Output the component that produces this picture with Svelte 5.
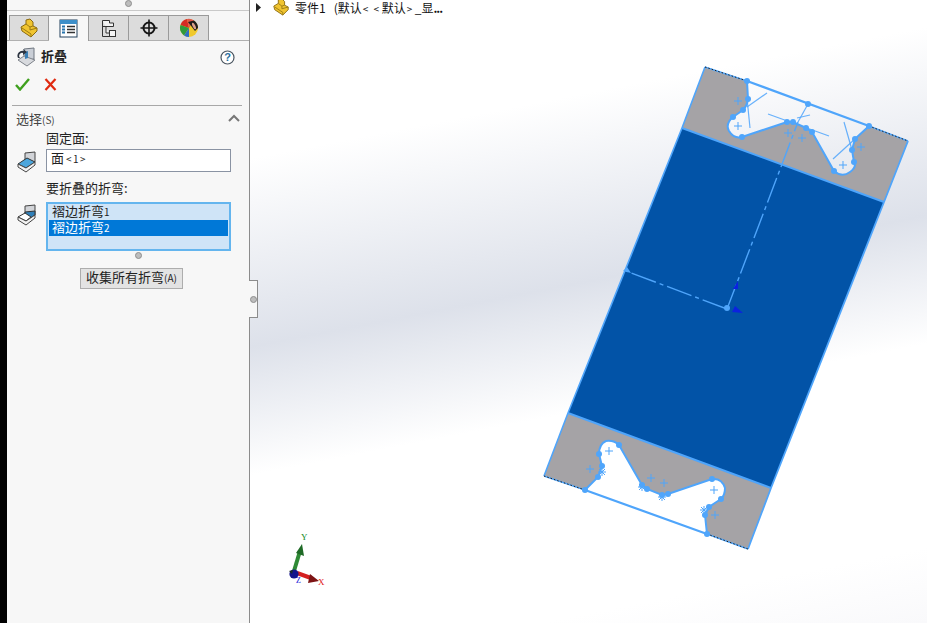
<script lang="ts">
  const tabs = ['part', 'tree', 'config', 'target', 'look']

  const topPoints = [[747,81],[748,99],[743,110],[733,117],[742,137],[787,122],[793,122],[806,128],[812,132],[834,171],[854,162],[852,150],[855,139],[869,126],[808,104]]
  const bottomPoints = [[585,490],[598,477],[602,466],[599,454],[619,445],[642,485],[647,489],[662,495],[668,494],[712,479],[721,499],[709,507],[705,515],[707,534]]
  const crosses = [[738,101],[738,126],[788,133],[802,138],[843,165],[861,147],[609,451],[590,469],[651,478],[664,483],[714,490],[715,515]]
  const thinLines = [
    [767,93,747,107],[747,98,750,128],[768,114,829,136],[810,115,797,118],
    [808,104,798,122],[844,122,852,150],[833,159,867,128]
  ]
  const stars = [[602,472],[642,487],[662,497],[704,510]]

  const topNotch = 'M747 81 L748 99 Q747 106 743 110 L733 117 Q725 124 729 131 Q734 139 742 137 L787 122 L793 122 L806 128 L812 132 L834 171 Q842 178 850 172 Q857 167 854 162 L852 150 L855 139 L869 126'
  const bottomNotch = 'M585 490 L598 477 L602 466 L599 454 Q599 444 606 441 Q614 440 619 445 L642 485 L647 489 L662 495 L668 494 L712 479 Q722 478 725 488 Q725 495 721 499 L709 507 L705 515 L707 534'
</script>

<div class="app">
  <div class="strip"></div>

  <aside class="panel">
    <div class="grip"><span class="dot"></span></div>

    <div class="tabs">
      {#each tabs as tab}
        <div class="tab" class:tab--active={tab === 'tree'}>
          {#if tab === 'part'}
            <svg width="20" height="20" viewBox="0 0 20 20">
              <path d="M2 9 L7 6 L7 2 L11 1 L14 4 L14 8 L18 10 L18 13 L12 19 L3 13 Z" fill="#f0c430" stroke="#8a6a10"/>
              <path d="M7 6 L11 9 L14 8 M11 9 L11 12 L18 10 M3 10 L12 16 L12 19" fill="none" stroke="#9a7a14"/>
            </svg>
          {:else if tab === 'tree'}
            <svg width="19" height="19" viewBox="0 0 19 19">
              <rect x="1" y="1" width="17" height="17" fill="#fff" stroke="#23405c"/>
              <rect x="1" y="1" width="17" height="4" fill="#3d8fc9"/>
              <path d="M3 7.5h3M3 10.5h3M3 13.5h3" stroke="#2674ad" stroke-width="2"/>
              <path d="M8 7.5h8M8 10.5h8M8 13.5h8" stroke="#333" stroke-width="1.4"/>
            </svg>
          {:else if tab === 'config'}
            <svg width="16" height="19" viewBox="0 0 16 19" fill="#f4f4f4" stroke="#333">
              <path d="M1.5 1.5 H8.5 V4 H12.5 V7.5 H5 V14 H8"/>
              <path d="M1.5 1.5 V17.5 H8 M5 7.5 H1.5" fill="none"/>
              <rect x="8.5" y="11.5" width="6" height="6"/>
            </svg>
          {:else if tab === 'target'}
            <svg width="18" height="18" viewBox="0 0 18 18" fill="none" stroke="#151515">
              <circle cx="9" cy="9" r="5.5" stroke-width="2"/>
              <path d="M9 0.5v17M0.5 9h17" stroke-width="1.6"/>
            </svg>
          {:else}
            <svg width="20" height="20" viewBox="0 0 20 20">
              <circle cx="10" cy="10" r="9" fill="#f0c92c"/>
              <path d="M10 10 L1.5 7 A9 9 0 0 1 8 1 Z" fill="#d62a24"/>
              <path d="M10 10 L8 1 A9 9 0 0 1 15 2.5 Z" fill="#e2574a"/>
              <path d="M10 10 L1.5 7 A9 9 0 0 0 5 17.5 Z" fill="#2f9a3c"/>
              <path d="M10 10 L5 17.5 A9 9 0 0 0 10 19 Z" fill="#2c6fc4"/>
              <path d="M9 4 L15 2.5 A9 9 0 0 1 19 10 L16 13 Z" fill="#1d1d1d"/>
              <ellipse cx="15" cy="8" rx="1.4" ry="3.6" fill="#dca08c" transform="rotate(-25 15 8)"/>
            </svg>
          {/if}
        </div>
      {/each}
    </div>

    <header class="title-row">
      <svg class="title-icon" width="22" height="20" viewBox="0 0 22 20">
        <path d="M9 2 L19 1 L19 12 L9 14 Z" fill="#c9ced6" stroke="#6f7680"/>
        <path d="M3 13 L9 9 L20 13 L12 19 Z" fill="#d8dade" stroke="#7d828a"/>
        <path d="M10 5 L13 4 L13 11 L10 12 Z" fill="#3a7fb5"/>
        <path d="M3 11 A5 5 0 0 1 9 4 L8 2 L12 5 L8 8 L8 6 A3 3 0 0 0 5 11 Z" fill="#2c3440"/>
      </svg>
      <h1>折叠</h1>
      <svg class="help" width="15" height="15" viewBox="0 0 15 15">
        <circle cx="7.5" cy="7.5" r="6.5" fill="#fff" stroke="#4a5560" stroke-width="1.2"/>
        <text x="7.5" y="11" text-anchor="middle" class="help-mark">?</text>
      </svg>
    </header>

    <div class="actions">
      <svg width="15" height="13" viewBox="0 0 15 13"><path d="M1 7 L5 11.5 L14 1" fill="none" stroke="#3fa01e" stroke-width="2.4"/></svg>
      <svg width="13" height="13" viewBox="0 0 13 13"><path d="M1.5 1 L11.5 12 M11.5 1 L1.5 12" fill="none" stroke="#e02a10" stroke-width="2.2"/></svg>
    </div>

    <section class="section">
      <div class="section-head">
        <span>选择<small>(S)</small></span>
        <svg width="12" height="8" viewBox="0 0 12 8"><path d="M1 7 L6 2 L11 7" fill="none" stroke="#777" stroke-width="2"/></svg>
      </div>

      <div class="label">固定面:</div>
      <div class="field">
        <svg class="face-icon" width="20" height="22" viewBox="0 0 20 22">
          <path d="M8 2 L18 1 L18 11 L8 13 Z" fill="#d2d4d8" stroke="#444"/>
          <path d="M1 13 L10 7 L18 11 L9 17 Z" fill="#4da6dc" stroke="#333"/>
          <path d="M1 13 L9 17 L18 11 L18 14 L9 21 L1 16 Z" fill="#f2f2f2" stroke="#444"/>
        </svg>
        <div class="input">面<small class="spaced">&lt;1&gt;</small></div>
      </div>

      <div class="label label--second">要折叠的折弯:</div>
      <div class="field">
        <svg class="face-icon" width="20" height="22" viewBox="0 0 20 22">
          <path d="M8 2 L18 1 L18 11 L8 13 Z" fill="#d2d4d8" stroke="#444"/>
          <path d="M8 8 L18 7 L18 11 L12 15 L8 13 Z" fill="#2f7fb8" stroke="#333"/>
          <path d="M1 13 L8 9 L14 13 L9 17 Z" fill="#fff" stroke="#333"/>
          <path d="M1 13 L9 17 L18 11 L18 14 L9 21 L1 16 Z" fill="#f2f2f2" stroke="#444"/>
        </svg>
        <div class="list">
          <div class="item">褶边折弯<small>1</small></div>
          <div class="item item--selected">褶边折弯<small>2</small></div>
        </div>
      </div>
      <div class="list-grip"><span class="dot"></span></div>

      <div class="button-row">
        <button type="button">收集所有折弯<small>(A)</small></button>
      </div>
    </section>
  </aside>

  <div class="handle"><span class="dot"></span></div>

  <main class="viewport">
    <div class="breadcrumb">
      <svg width="7" height="9" viewBox="0 0 7 9"><path d="M1 0 L6 4.5 L1 9 Z" fill="#222"/></svg>
      <svg class="crumb-part" width="18" height="18" viewBox="0 0 20 20">
        <path d="M2 9 L7 6 L7 2 L11 1 L14 4 L14 8 L18 10 L18 13 L12 19 L3 13 Z" fill="#f0c430" stroke="#8a6a10"/>
        <path d="M7 6 L11 9 L14 8 M11 9 L11 12 L18 10 M3 10 L12 16 L12 19" fill="none" stroke="#9a7a14"/>
      </svg>
      <span>零件1&nbsp;&nbsp;&nbsp;(默认<small class="crumb-gap">&lt; &lt;</small>默认<small class="crumb-gap">&gt;</small>_显<b class="more">...</b></span>
    </div>

    <svg class="model" viewBox="250 0 677 623" width="677" height="623">
      <!-- flat regions -->
      <path d="M705 67 L747 81 L748 99 Q747 106 743 110 L733 117 Q725 124 729 131 Q734 139 742 137 L787 122 L793 122 L806 128 L812 132 L834 171 Q842 178 850 172 Q857 167 854 162 L852 150 L855 139 L869 126 L908 141 L884 202 L682 128 Z" fill="#a5a3a6"/>
      <path d="M568 413 L771 488 L748 549 L707 534 L705 515 L709 507 L721 499 Q725 495 725 488 Q722 478 712 479 L668 494 L662 495 L647 489 L642 485 L619 445 Q614 440 606 441 Q599 444 599 454 L602 466 L598 477 L585 490 L544 476 Z" fill="#a5a3a6"/>
      <path d="M682 128 L884 202 L771 488 L568 413 Z" fill="#0253a7"/>

      <!-- part outline -->
      <g fill="none" stroke="#4fa5fb">
        <path d="M705 67 L682 128 L568 413 L544 476" stroke-width="1.6"/>
        <path d="M908 141 L884 202 L771 488 L748 549" stroke-width="1.8"/>
        <path d="M682 128 L884 202 M568 413 L771 488" stroke-width="2"/>
        <path d={topNotch} stroke-width="2"/>
        <path d={bottomNotch} stroke-width="2"/>
        <path d="M747 81 L869 126 M585 490 L707 534" stroke-width="2.2"/>
        <path d="M705 67 L747 81 M869 126 L908 141 M544 476 L585 490 M707 534 L748 549" stroke-width="1.4"/>
      </g>
      <path d="M705 67 L747 81 M869 126 L908 141 M544 476 L585 490 M707 534 L748 549" fill="none" stroke="#222" stroke-dasharray="1.5 2"/>

      <!-- sketch construction -->
      <g stroke="#4fa5fb" fill="none">
        {#each thinLines as l}
          <line x1={l[0]} y1={l[1]} x2={l[2]} y2={l[3]} stroke-width="1.2" opacity="0.85"/>
        {/each}
        <path d="M727 309 L798 122" stroke-dasharray="26 4 4 4" stroke-width="1.4"/>
        <path d="M727 309 L626 271" stroke-dasharray="26 4 4 4" stroke-width="1.4"/>
        {#each crosses as c}
          <path d="M{c[0] - 4} {c[1]} h8 M{c[0]} {c[1] - 4} v8"/>
        {/each}
        {#each stars as s}
          <path d="M{s[0] - 4} {s[1]} h8 M{s[0]} {s[1] - 4} v8 M{s[0] - 3} {s[1] - 3} l6 6 M{s[0] + 3} {s[1] - 3} l-6 6"/>
        {/each}
      </g>
      <g fill="#4fa5fb">
        {#each topPoints as p}
          <circle cx={p[0]} cy={p[1]} r="3"/>
        {/each}
        {#each bottomPoints as p}
          <circle cx={p[0]} cy={p[1]} r="3"/>
        {/each}
        <path d="M623 271 L627 267 L631 273 Z"/>
        <circle cx="727" cy="308" r="3"/>
      </g>
      <path d="M733 289 h5 v-8 Z M732 312 L735 306 L743 313 Z" fill="#0b22e0"/>

      <!-- triad -->
      <g>
        <path d="M294 571 L300 551" stroke="#2f8a35" stroke-width="4"/>
        <path d="M296 553 L302 544 L304 556 Z" fill="#1f6a26"/>
        <path d="M297 573 L311 578" stroke="#d42020" stroke-width="4"/>
        <path d="M310 574 L319 581 L308 583 Z" fill="#7d1414"/>
        <circle cx="294" cy="574" r="4.6" fill="#14148c"/>
        <path d="M289 571 l4 -1 l-1 4 Z" fill="#1a2a2a"/>
        <text x="301" y="540" class="axis axis--y">Y</text>
        <text x="318" y="585" class="axis axis--x">X</text>
        <text x="296" y="583" class="axis axis--z">Z</text>
      </g>
    </svg>
  </main>
</div>

<style>
  :global(body) {
    margin: 0;
    background: #fff;
  }

  .app {
    position: relative;
    display: flex;
    width: 927px;
    height: 623px;
    overflow: hidden;
    font-family: "Noto Sans CJK SC", "Noto Sans", sans-serif;
    font-size: 13px;
    color: #222;
  }

  .strip {
    flex: 0 0 7px;
    background: #000;
  }

  .panel {
    flex: 0 0 243px;
    box-sizing: border-box;
    background: #f7f7f7;
    border-right: 1px solid #8c8c8c;
    display: flex;
    flex-direction: column;
  }

  .dot {
    display: block;
    width: 5px;
    height: 5px;
    border-radius: 50%;
    background: #bdbdbd;
    border: 1px solid #8f8f8f;
  }

  .grip {
    height: 10px;
    border-bottom: 1px solid #c9c9c9;
    display: flex;
    justify-content: center;
    align-items: flex-start;
  }

  /* ── Tabs ── */
  .tabs {
    display: flex;
    margin-top: 4px;
    padding-left: 2px;
    height: 25px;
    border-bottom: 1px solid #b0b0b0;
  }

  .tab {
    box-sizing: border-box;
    width: 40px;
    height: 25px;
    background: #dcdcdc;
    border: 1px solid #9a9a9a;
    border-left: 0;
    border-bottom: 0;
    display: flex;
    align-items: center;
    justify-content: center;
  }

  .tab:first-child { border-left: 1px solid #9a9a9a; }

  .tab--active {
    background: #f7f7f7;
    height: 26px;
    position: relative;
    z-index: 1;
  }

  /* ── Title ── */
  .title-row {
    display: flex;
    align-items: center;
    height: 20px;
    margin-top: 6px;
    padding: 0 14px 0 8px;
  }

  .title-row h1 {
    margin: 0 0 2px 4px;
    font-size: 13px;
    font-weight: 700;
    line-height: 18px;
    flex: 1;
  }

  .help-mark {
    font-family: "Liberation Sans", sans-serif;
    font-size: 11px;
    font-weight: 700;
    fill: #2a6f9e;
  }

  .actions {
    display: flex;
    align-items: center;
    gap: 14px;
    margin-top: 10px;
    padding-left: 8px;
    height: 14px;
  }

  /* ── Section ── */
  .section {
    margin: 14px 7px 0 5px;
    border-top: 1px solid #a8a8a8;
  }

  .section-head {
    display: flex;
    justify-content: space-between;
    align-items: center;
    height: 16px;
    margin-top: 4px;
    padding: 0 2px 0 4px;
    font-size: 13px;
    color: #444;
  }

  small {
    font-size: 10px;
  }

  .spaced {
    letter-spacing: 1.5px;
    margin: 0 2px;
  }

  .crumb-gap {
    letter-spacing: 1.5px;
    margin: 0 1px;
  }

  .more {
    letter-spacing: -1px;
  }

  .label {
    margin: 4px 0 0 34px;
    height: 19px;
    line-height: 15px;
  }

  .label--second {
    margin-top: 7px;
    height: 22px;
  }

  .field {
    display: flex;
    align-items: flex-start;
    padding-left: 5px;
  }

  .face-icon {
    flex: 0 0 20px;
    margin: 2px 9px 0 0;
  }

  .input {
    box-sizing: border-box;
    width: 185px;
    height: 23px;
    background: #fff;
    border: 1px solid #8a93a3;
    padding-left: 4px;
    line-height: 15px;
  }

  .list {
    box-sizing: border-box;
    width: 185px;
    height: 49px;
    background: #cfe4f7;
    border: 1px solid #64b5ee;
    box-shadow: inset 0 0 0 1px #64b5ee;
    padding: 1px 2px;
  }

  .item {
    height: 16px;
    line-height: 13px;
    padding-left: 3px;
    white-space: nowrap;
  }

  .item--selected {
    background: #0078d7;
    color: #fff;
  }

  .list-grip {
    display: flex;
    justify-content: center;
    margin-top: 1px;
    padding-left: 22px;
    height: 7px;
  }

  .button-row {
    display: flex;
    margin: 9px 0 0 68px;
  }

  button {
    box-sizing: border-box;
    width: 103px;
    height: 21px;
    padding: 0 0 3px;
    background: #e3e3e3;
    border: 1px solid #adadad;
    font: inherit;
    color: #222;
    line-height: 15px;
    white-space: nowrap;
  }

  /* ── Side handle (over the split) ── */
  .handle {
    position: absolute;
    left: 249px;
    top: 280px;
    width: 9px;
    height: 38px;
    box-sizing: border-box;
    background: #f7f7f7;
    border: 1px solid #8c8c8c;
    border-left: 0;
    display: flex;
    align-items: center;
    justify-content: center;
    z-index: 2;
  }

  /* ── Viewport ── */
  .viewport {
    position: relative;
    flex: 1;
    background: linear-gradient(169deg, #fff 21%, #dde1ea 46%, #fff 63%, #fff 90%, #f9f9fb 100%);
  }

  .model {
    position: absolute;
    inset: 0;
    display: block;
  }

  .breadcrumb {
    position: absolute;
    z-index: 1;
    left: 5px;
    top: -3px;
    display: flex;
    align-items: center;
    height: 20px;
    font-size: 12px;
    color: #111;
    white-space: nowrap;
  }

  .crumb-part {
    margin: 0 5px 0 10px;
  }

  .axis {
    font-family: "Liberation Serif", serif;
    font-size: 9px;
  }

  .axis--y { fill: #0f8a1c; }
  .axis--x { fill: #e01414; }
  .axis--z { fill: #1414d8; font-size: 8px; }
</style>
